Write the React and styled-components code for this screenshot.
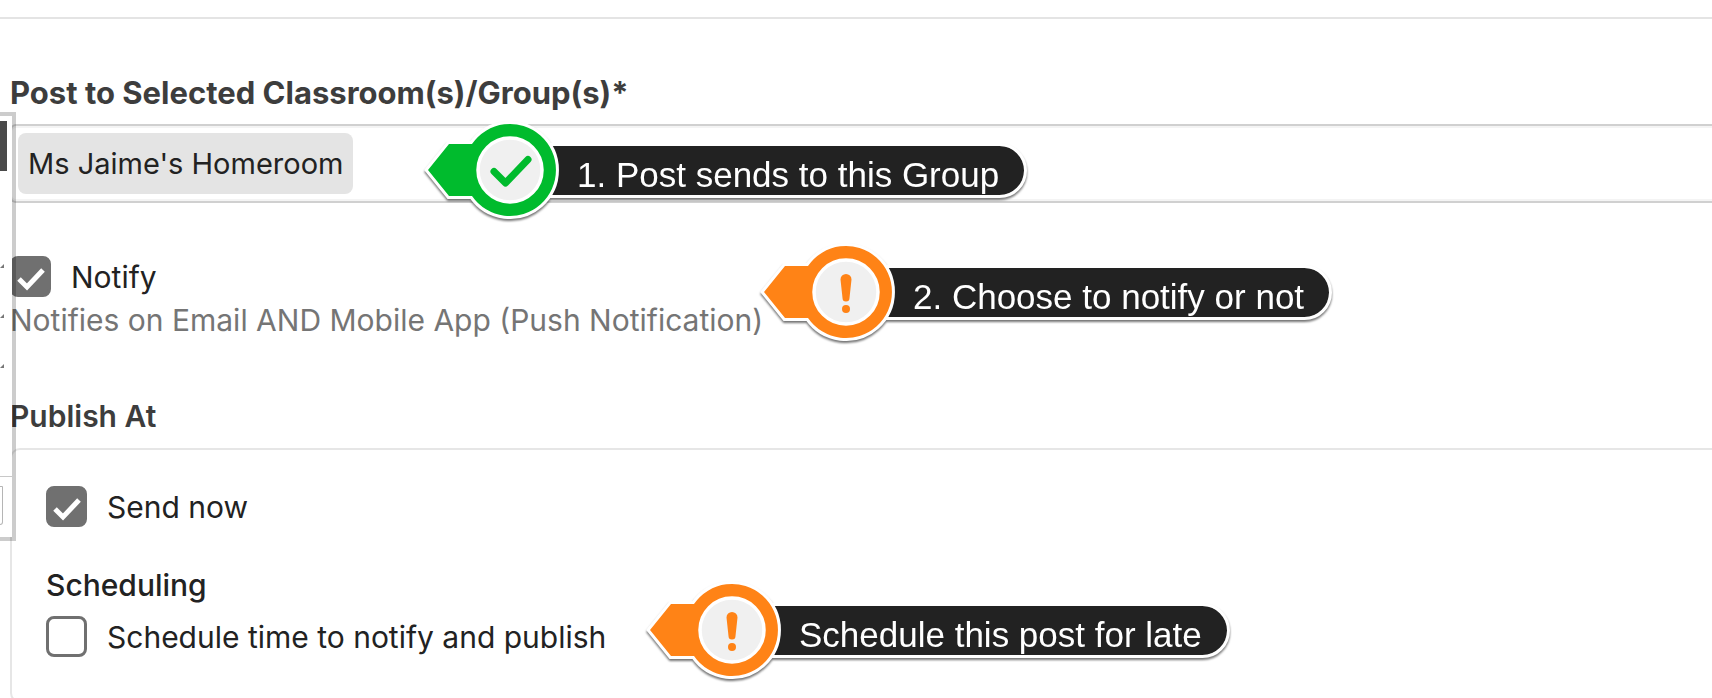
import React from 'react'
import styled, { createGlobalStyle, css } from 'styled-components'

const GlobalStyle = createGlobalStyle`
	* {
		box-sizing: border-box;
	}

	body {
		margin: 0;
		overflow: hidden;
		background: #fff;
		color: #222;
		font-family: 'Inter', 'Liberation Sans', sans-serif;
		font-size: 30px;
		font-weight: 400;
		line-height: 40px;
	}
`

const Page = styled.main`
	position: relative;
	min-height: 100vh;
	padding-top: 17px;
`

const Form = styled.form`
	display: flex;
	flex-direction: column;
	padding: 54px 0 0 10px;
	border-top: 2px solid #e4e4e4;
`

const heading = css`
	margin: 0;
	color: #3d3d3d;
	line-height: 40px;
`

const FieldLabel = styled.h2`
	${heading};
	font-size: 31px;
	font-weight: 700;
`

const GroupField = styled.div`
	position: relative;
	display: flex;
	margin-top: 11px;
	padding: 7px 6px;
	border: 2px solid #d0d0d0;
	border-right: 0;
	border-radius: 6px 0 0 6px;
	box-shadow: inset 0 2px #f4f4f4, inset 0 -2px #f4f4f4;
`

const Chip = styled.button`
	padding: 10px;
	border: 0;
	border-radius: 8px;
	background: #e4e4e4;
	color: #222;
	font: inherit;
	font-size: 29px;
	line-height: 41px;
`

const NotifyBlock = styled.div`
	position: relative;
	margin-top: 53px;
`

const CheckLabel = styled.label`
	display: flex;
	align-items: center;
	gap: 20px;
`

const CheckBox = styled.span`
	display: grid;
	flex: none;
	width: 41px;
	height: 41px;

	> * {
		grid-area: 1 / 1;
	}

	svg {
		width: 41px;
		height: 41px;
		pointer-events: none;
	}
`

const CheckInput = styled.input`
	appearance: none;
	width: 41px;
	height: 41px;
	margin: 0;
	border: 3px solid #707070;
	border-radius: 8px;
	background: #fff;

	&:checked {
		background: #707070;
	}

	&:not(:checked) + svg {
		display: none;
	}
`

const Hint = styled.p`
	margin: 3px 0 0;
	color: #757575;
`

const PublishLabel = styled.h2`
	${heading};
	margin-top: 56px;
	font-size: 30px;
	font-weight: 600;
`

const Card = styled.section`
	margin-top: 12px;
	padding: 36px 34px 44px;
	border: 2px solid #e6e6e6;
	border-right: 0;
	border-radius: 10px 0 0 10px;
`

const SubHeading = styled.h3`
	margin: 38px 0 11px;
	color: #222;
	font-size: 30px;
	font-weight: 500;
	line-height: 40px;
`

const ScheduleRow = styled.div`
	position: relative;
`

// Callouts float over the form, anchored to the row they describe
const CalloutBox = styled.aside`
	position: absolute;
	top: ${props => props.$top}px;
	left: ${props => props.$left}px;
	z-index: 3;
	display: flex;
	align-items: center;
	filter: drop-shadow(0 2px 1px rgba(0, 0, 0, 0.55));
`

const Marker = styled.svg`
	position: relative;
	flex: none;
	width: 140px;
	height: 104px;
`

const CalloutText = styled.div`
	height: 55px;
	margin-left: -50px;
	padding: 4px 25px 0 64px;
	overflow: hidden;
	border: 3px solid #fff;
	border-radius: 28px;
	background: #222;
	background-clip: padding-box;
	color: #fff;
	font-family: 'Liberation Sans', Arial, sans-serif;
	font-size: 35px;
	font-weight: 400;
	line-height: 49px;
	white-space: nowrap;
	order: 2;
`

// Edge of the side panel that lies over the left of the form
const SidePanel = styled.aside`
	position: absolute;
	top: 112px;
	left: 0;
	z-index: 2;
	display: flex;
	flex-direction: column;
	width: 16px;
	height: 429px;
	padding-top: 5px;
	border: 4px solid rgba(0, 0, 0, 0.2);
	border-left: 0;
	background: #fff;
	background-clip: padding-box;
`

const PanelTab = styled.div`
	width: 7px;
	height: 50px;
	background: #4a4a4a;
`

const PanelMarks = styled.div`
	display: flex;
	flex: 1;
	flex-direction: column;
	gap: 46px;
	padding-top: 93px;

	svg {
		width: 4px;
		height: 4px;
	}
`

const PanelFooter = styled.div`
	height: 61px;
	padding-top: 9px;
	border-top: 1px solid #c8c8c8;
`

const PanelButton = styled.div`
	width: 3px;
	height: 39px;
	border: 1px solid #b5b5b5;
	border-left: 0;
	border-radius: 0 1px 3px 0;
`

const Check = ({ children, ...props }) => (
	<CheckLabel>
		<CheckBox>
			<CheckInput type="checkbox" {...props} />
			<svg viewBox="0 0 41 41" fill="none" stroke="#fff" strokeWidth="5">
				<path d="M9 23l8 8 16-17" />
			</svg>
		</CheckBox>
		{children}
	</CheckLabel>
)

const markerShape = 'M8 52L29 26H52A46 46 0 1 1 52 78H29Z'

const Callout = ({ top, left, done, children }) => {
	const color = done ? '#00bb2d' : '#ff8316'

	return (
		<CalloutBox $top={top} $left={left}>
			<CalloutText>{children}</CalloutText>
			<Marker viewBox="0 0 140 104" aria-hidden="true">
				<path d={markerShape} fill={color} stroke="#fff" strokeWidth="6" paintOrder="stroke" />
				<circle cx="90" cy="52" r="32" fill="#f0f0f0" stroke="#fff" strokeWidth="3.500" />
				{done ? (
					<path
						d="M74 53.500L85.500 65L108 41.500"
						fill="none"
						stroke={color}
						strokeWidth="7"
						strokeLinecap="round"
						strokeLinejoin="round"
					/>
				) : (
					<g fill={color}>
						<path d="M84.500 39.500a5.500 5.500 0 0 1 11 0L93.500 58a3.500 3.500 0 0 1-7 0Z" />
						<circle cx="90" cy="69" r="4" />
					</g>
				)}
			</Marker>
		</CalloutBox>
	)
}

const App = () => (
	<>
		<GlobalStyle />
		<Page>
			<SidePanel>
				<PanelTab />
				<PanelMarks>
					{[1, 2, 3].map(mark => (
						<svg key={mark} viewBox="0 0 4 4">
							<path d="M0 4L4 0V4Z" fill="#777" />
						</svg>
					))}
				</PanelMarks>
				<PanelFooter>
					<PanelButton />
				</PanelFooter>
			</SidePanel>

			<Form>
				<FieldLabel>Post to Selected Classroom(s)/Group(s)*</FieldLabel>
				<GroupField>
					<Chip type="button">Ms Jaime's Homeroom</Chip>
					<Callout top={-8} left={408} done>
						1. Post sends to this Group
					</Callout>
				</GroupField>

				<NotifyBlock>
					<Check defaultChecked>Notify</Check>
					<Hint>Notifies on Email AND Mobile App (Push Notification)</Hint>
					<Callout top={-16} left={746}>
						2. Choose to notify or not
					</Callout>
				</NotifyBlock>

				<PublishLabel>Publish At</PublishLabel>
				<Card>
					<Check defaultChecked>Send now</Check>
					<SubHeading>Scheduling</SubHeading>
					<ScheduleRow>
						<Check>Schedule time to notify and publish</Check>
						<Callout top={-38} left={596}>
							Schedule this post for late
						</Callout>
					</ScheduleRow>
				</Card>
			</Form>
		</Page>
	</>
)

export default App
